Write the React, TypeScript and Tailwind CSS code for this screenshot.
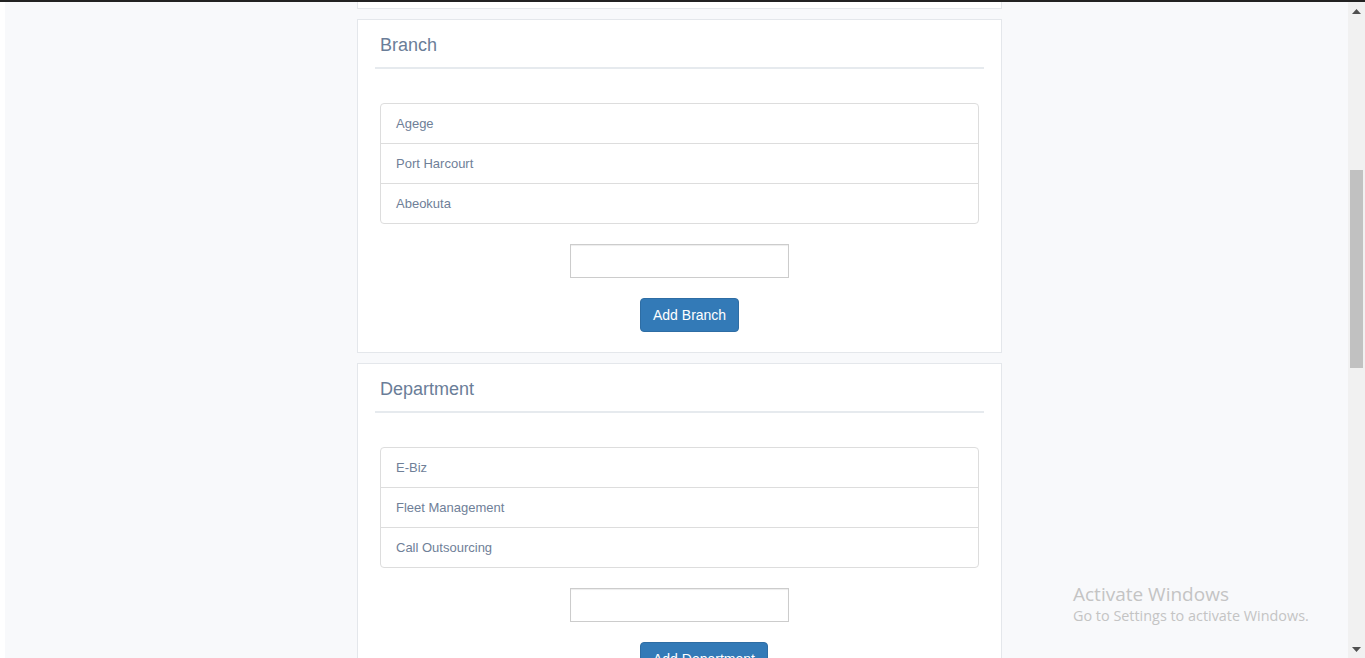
const branches = ['Agege', 'Port Harcourt', 'Abeokuta'];
const departments = ['E-Biz', 'Fleet Management', 'Call Outsourcing'];

function SettingCard({ title, items, button }: { title: string; items: string[]; button: string }) {
  return (
    <section className="bg-white border border-[#e4e7eb] px-[17px] pt-[15px] pb-[20px]">
      <h3 className="pl-[5px] text-[18px] leading-[20px] text-[#6a7d98]">{title}</h3>
      <div className="mt-[12px] h-[2px] bg-[#e6eaee]" />

      <div className="ml-[5px] mr-[5px] mt-[34px]">
        {/* List */}
        <ul className="border border-[#dddddd] rounded-[4px]">
          {items.map((item, i) => (
            <li
              key={item}
              className={`flex items-center px-[15px] text-[13px] text-[#6f8098] ${
                i === 0 ? 'h-[39px]' : 'h-[40px] border-t border-[#dddddd]'
              }`}
            >
              {item}
            </li>
          ))}
        </ul>

        {/* Input */}
        <div className="flex justify-center mt-[20px]">
          <input
            type="text"
            className="w-[219px] h-[34px] border border-[#cccccc] bg-white shadow-[inset_0_1px_1px_rgba(0,0,0,0.075)] outline-none"
          />
        </div>

        {/* Button */}
        <div className="mt-[20px] pl-[260px]">
          <button className="h-[34px] px-[12px] rounded-[4px] bg-[#337ab7] border border-[#2e6da4] text-white text-[14px] leading-[20px]">
            {button}
          </button>
        </div>
      </div>
    </section>
  );
}

export default function App() {
  return (
    <div className="relative h-[658px] overflow-hidden bg-[#f8f9fb] font-['Liberation_Sans',Arial,sans-serif] flex flex-col">
      {/* Top dark strip */}
      <div className="h-[2px] bg-[#222222] shrink-0" />

      <div className="flex flex-1 min-h-0">
        <div className="w-[5px] bg-white shrink-0" />

        {/* Main content */}
        <main className="flex-1 min-w-0 overflow-hidden">
          <div className="ml-[352px] w-[645px] flex flex-col gap-[10px]">
            <div className="h-[7px] bg-white border-x border-b border-[#e4e7eb]" />
            <SettingCard title="Branch" items={branches} button="Add Branch" />
            <SettingCard title="Department" items={departments} button="Add Department" />
          </div>
        </main>

        {/* Scrollbar */}
        <div className="w-[17px] shrink-0 bg-[#f1f1f1] flex flex-col items-center">
          <div className="h-[17px] flex items-center justify-center pt-[2px]">
            <svg width="9" height="5" viewBox="0 0 9 5">
              <path d="M4.5 0L9 5H0z" fill="#505050" />
            </svg>
          </div>
          <div className="mt-[151px] w-[13px] h-[198px] bg-[#c1c1c1]" />
          <div className="flex-1" />
          <div className="h-[17px] flex items-center justify-center">
            <svg width="9" height="5" viewBox="0 0 9 5">
              <path d="M0 0H9L4.5 5z" fill="#505050" />
            </svg>
          </div>
        </div>
      </div>

      {/* Activate Windows watermark */}
      <div className="absolute left-[1073px] top-[581px] text-[#c4c4c4] font-['Open_Sans','Noto_Sans',sans-serif] pointer-events-none">
        <div className="text-[19px] leading-[26px]">Activate Windows</div>
        <div className="text-[14.4px] leading-[18px]">Go to Settings to activate Windows.</div>
      </div>
    </div>
  );
}
